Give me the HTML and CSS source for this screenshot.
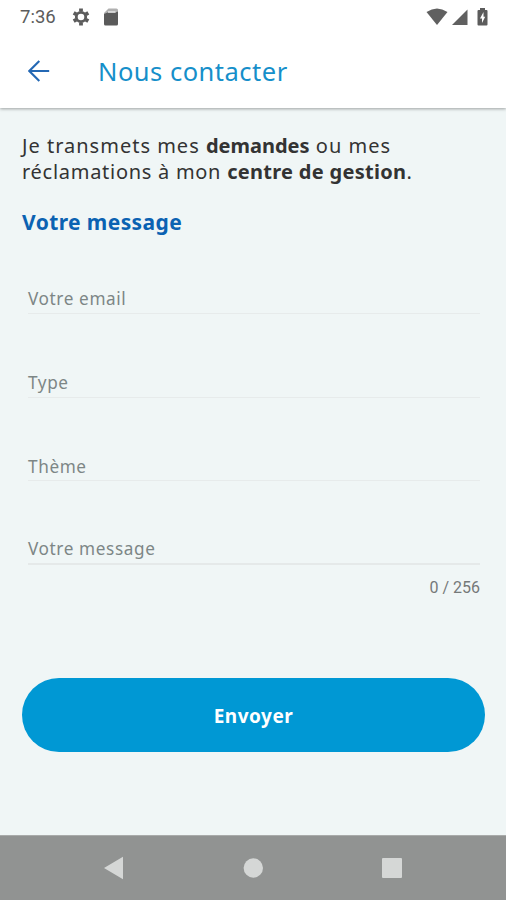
FILE: index.html
```html
<!DOCTYPE html>
<html lang="fr">
<head>
    <meta charset="UTF-8">
    <meta name="viewport" content="width=device-width, initial-scale=1.0">
    <title>Nous contacter</title>
    <link rel="stylesheet" href="styles.css">
</head>
<body>
    <header>
        <div class="status-bar">
            <span class="time">7:36</span>
            <svg class="gear" width="18" height="18" viewBox="0 0 18 18">
                <circle cx="9" cy="9" r="4.7" fill="none" stroke="#5c5c5c" stroke-width="2.8"/>
                <path d="M9 .6v3M9 14.4v3M1.7 4.8l2.6 1.5M13.7 11.7l2.6 1.5M1.7 13.2l2.6-1.5M13.7 6.3l2.6-1.5" stroke="#5c5c5c" stroke-width="3.8"/>
            </svg>
            <svg class="card" width="14" height="18" viewBox="0 0 14 18">
                <path d="M4.500 .5h8Q14 .5 14 2v6H0V5z" fill="#b0b0b0"/>
                <path d="M0 6L3.500 4.500h8L14 3.500V16q0 1.500-1.500 1.500h-11Q0 17.500 0 16z" fill="#5a5a5a"/>
                <path d="M4 4h7.500" stroke="#e6e6e6" stroke-width="1.500"/>
            </svg>
            <div class="signals">
                <svg width="22" height="18" viewBox="0 0 22 18">
                    <path d="M.5 4Q11-3.200 21.500 4L11 17z" fill="#606060"/>
                </svg>
                <svg class="network" width="16" height="18" viewBox="0 0 16 18">
                    <path d="M15.500 1.500v15.500H0z" fill="#606060"/>
                </svg>
                <svg class="battery" width="11" height="18" viewBox="0 0 11 18">
                    <path d="M3 0h5v2h1.500Q10.500 2 10.500 3v13.500q0 1-1 1h-8q-1 0-1-1V3q0-1 1-1H3z" fill="#5c5c5c"/>
                    <path d="M6.500 4L3 10.500h2v4.500L8.200 8.800H6.500z" fill="#fff"/>
                </svg>
            </div>
        </div>
        <div class="app-bar">
            <svg class="back" width="22" height="22" viewBox="0 0 22 22">
                <path d="M21.200 11H1.500M11.300 1L1.300 11l10 10" fill="none" stroke="#2468b4" stroke-width="2.100"/>
            </svg>
            <h1>Nous contacter</h1>
        </div>
    </header>

    <main>
        <p class="intro"><span class="line first">Je transmets mes <b>demandes</b> ou mes</span> <span class="line second">réclamations à mon <b>centre de gestion</b>.</span></p>
        <h2>Votre message</h2>
        <form id="contactForm">
            <div class="form-group"><label>Votre email</label></div>
            <div class="form-group"><label>Type</label></div>
            <div class="form-group"><label>Thème</label></div>
            <div class="form-group message"><label>Votre message</label></div>
            <p class="counter">0 / 256</p>
            <button type="submit">Envoyer</button>
        </form>
    </main>

    <nav>
        <svg width="20" height="24" viewBox="0 0 20 24"><path d="M0 12L19 .8v22.400z" fill="#d5d7d6"/></svg>
        <svg width="20" height="20" viewBox="0 0 20 20"><circle cx="10.300" cy="10" r="9.700" fill="#d5d7d6"/></svg>
        <svg width="20" height="20" viewBox="0 0 20 20"><rect width="20" height="20" rx="1" fill="#d5d7d6"/></svg>
    </nav>
</body>
</html>
```
FILE: styles.css
```css
* {
    box-sizing: border-box;
}
body {
    display: flex;
    flex-direction: column;
    height: 900px;
    margin: 0;
    overflow: hidden;
    background-color: #f0f6f6;
    font-family: "Noto Sans", sans-serif;
}
svg {
    display: block;
    flex-shrink: 0;
}
header {
    height: 108px;
    background-color: #fff;
    box-shadow: 0 1px 3px rgba(0, 0, 0, 0.35);
}
.status-bar {
    display: flex;
    align-items: center;
    height: 34px;
    padding: 0 18px 0 20px;
}
.time {
    width: 52px;
    font-family: Roboto, sans-serif;
    font-size: 18.5px;
    color: #5c5c5c;
}
.card {
    margin-left: 14px;
}
.signals {
    display: flex;
    margin-left: auto;
}
.network {
    margin-left: 4px;
}
.battery {
    margin-left: 9px;
}
.app-bar {
    display: flex;
    align-items: center;
    height: 74px;
    padding: 0 28px;
}
h1 {
    margin: 0 0 0 48px;
    font-size: 25.5px;
    font-weight: 400;
    line-height: 34px;
    letter-spacing: 0.5px;
    color: #168fca;
}
main {
    flex: 1;
    padding: 25px 21px 0 22px;
}
.intro {
    margin: 0;
    font-size: 20px;
    line-height: 26px;
    color: #333;
}
.line {
    display: block;
    white-space: nowrap;
}
.first {
    letter-spacing: 1px;
}
.first b {
    letter-spacing: 0;
}
.second {
    letter-spacing: 0.72px;
}
.second b {
    letter-spacing: 0.3px;
}
b {
    font-weight: 700;
}
h2 {
    margin: 22px 0 0;
    font-size: 21px;
    line-height: 30px;
    letter-spacing: 0.4px;
    color: #0b62b2;
}
form {
    margin: -7px 0 0;
}
.form-group {
    display: flex;
    align-items: flex-end;
    height: 84px;
    margin: 0 5px 0 6px;
    padding-bottom: 3px;
    border-bottom: 1px solid #e7ebeb;
}
.form-group:nth-child(3) {
    height: 83px;
    padding-bottom: 2px;
}
.message {
    border-bottom: 2px solid #e5e9e9;
}
label {
    font-size: 17.2px;
    line-height: 22px;
    letter-spacing: 0.6px;
    color: #7d8686;
}
.counter {
    margin: 13px 5px 0 0;
    font-family: Roboto, sans-serif;
    font-size: 16px;
    line-height: 20px;
    text-align: right;
    color: #757979;
}
button {
    display: block;
    width: 100%;
    height: 74px;
    margin-top: 79.5px;
    padding: 3px 0 0;
    border: none;
    border-radius: 37px;
    background-color: #0098d4;
    color: #fff;
    font-family: "Noto Sans", sans-serif;
    font-size: 19px;
    font-weight: 700;
    letter-spacing: 0.5px;
}
nav {
    display: flex;
    align-items: center;
    justify-content: space-between;
    height: 65px;
    padding: 0 104px;
    border-top: 1px solid #a9abaa;
    background-color: #919392;
}
```
